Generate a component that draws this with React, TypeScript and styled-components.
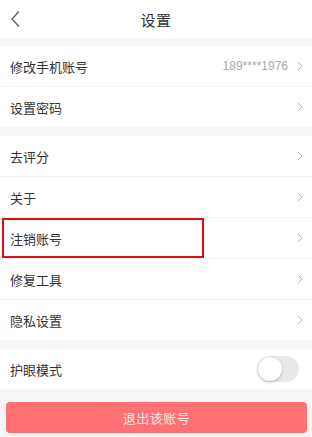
import styled, { createGlobalStyle } from 'styled-components'

const GlobalStyle = createGlobalStyle`
  html, body {
    margin: 0;
    padding: 0;
    background: #f6f6f6;
  }
  body {
    font-family: 'Noto Sans CJK SC', 'Noto Sans', sans-serif;
  }
`

const Page = styled.div`
  width: 312px;
  height: 437px;
  background: #f6f6f6;
  display: flex;
  flex-direction: column;
  overflow: hidden;
`

const Header = styled.div`
  height: 38px;
  background: #fff;
  display: flex;
  align-items: center;
  justify-content: center;
  position: relative;
`

const BackButton = styled.div`
  position: absolute;
  left: 9px;
  top: 10px;
  width: 16px;
  height: 18px;
  display: flex;
`

const Title = styled.div`
  font-size: 15px;
  color: #333;
  letter-spacing: 0.5px;
`

const Group = styled.div<{ gapTop: number }>`
  margin-top: ${({ gapTop }) => gapTop}px;
  background: #fff;
  display: flex;
  flex-direction: column;
`

const Row = styled.div<{ last?: boolean }>`
  position: relative;
  height: 40px;
  padding: 0 9px 0 10px;
  display: flex;
  align-items: center;
  border-bottom: ${({ last }) => (last ? 'none' : '1px solid #f1f1f1')};
`

const Label = styled.span`
  flex: 1;
  font-size: 13px;
  color: #333;
`

const Value = styled.span`
  font-family: 'Liberation Sans', Arial, sans-serif;
  font-size: 12px;
  color: #aaa;
  margin-right: 9px;
`

const Highlight = styled.div`
  position: absolute;
  left: 2px;
  top: 0;
  width: 198px;
  height: 36px;
  border: 2px solid #d9121a;
  pointer-events: none;
`

const Toggle = styled.div`
  width: 42px;
  height: 26px;
  border-radius: 13px;
  background: #e9e9eb;
  position: relative;
  margin-right: 4px;
`

const Knob = styled.div`
  position: absolute;
  left: 1px;
  top: 1px;
  width: 24px;
  height: 24px;
  border-radius: 50%;
  background: #fff;
  box-shadow: 0 1px 3px rgba(0, 0, 0, 0.25);
`

const Footer = styled.div`
  padding: 13px 5px 0 6px;
`

const LogoutButton = styled.div`
  height: 31px;
  border-radius: 4px;
  background: #ff7173;
  color: #ffe9ea;
  font-size: 13px;
  display: flex;
  align-items: center;
  justify-content: center;
  letter-spacing: 0.5px;
`

const Chevron = () => (
  <svg width="6" height="10" viewBox="0 0 6 10">
    <path d="M1 1l4 4-4 4" fill="none" stroke="#b5b5b5" strokeWidth="1" />
  </svg>
)

const BackIcon = () => (
  <svg width="16" height="18" viewBox="0 0 16 18">
    <path d="M10 1.5L3 9l7 7.5" fill="none" stroke="#555" strokeWidth="1.2" />
  </svg>
)

type Item = { label: string; value?: string; highlight?: boolean }

const groupA: Item[] = [{ label: '修改手机账号', value: '189****1976' }, { label: '设置密码' }]

const groupB: Item[] = [
  { label: '去评分' },
  { label: '关于' },
  { label: '注销账号', highlight: true },
  { label: '修复工具' },
  { label: '隐私设置' },
]

function renderItems(items: Item[]) {
  return items.map((item, index) => (
    <Row key={item.label} last={index === items.length - 1}>
      <Label>{item.label}</Label>
      {item.value && <Value>{item.value}</Value>}
      <Chevron />
      {item.highlight && <Highlight />}
    </Row>
  ))
}

export default function App() {
  return (
    <Page>
      <GlobalStyle />
      <Header>
        <BackButton>
          <BackIcon />
        </BackButton>
        <Title>设置</Title>
      </Header>
      <Group gapTop={8}>{renderItems(groupA)}</Group>
      <Group gapTop={9}>{renderItems(groupB)}</Group>
      <Group gapTop={9}>
        <Row last>
          <Label>护眼模式</Label>
          <Toggle>
            <Knob />
          </Toggle>
        </Row>
      </Group>
      <Footer>
        <LogoutButton>退出该账号</LogoutButton>
      </Footer>
    </Page>
  )
}
